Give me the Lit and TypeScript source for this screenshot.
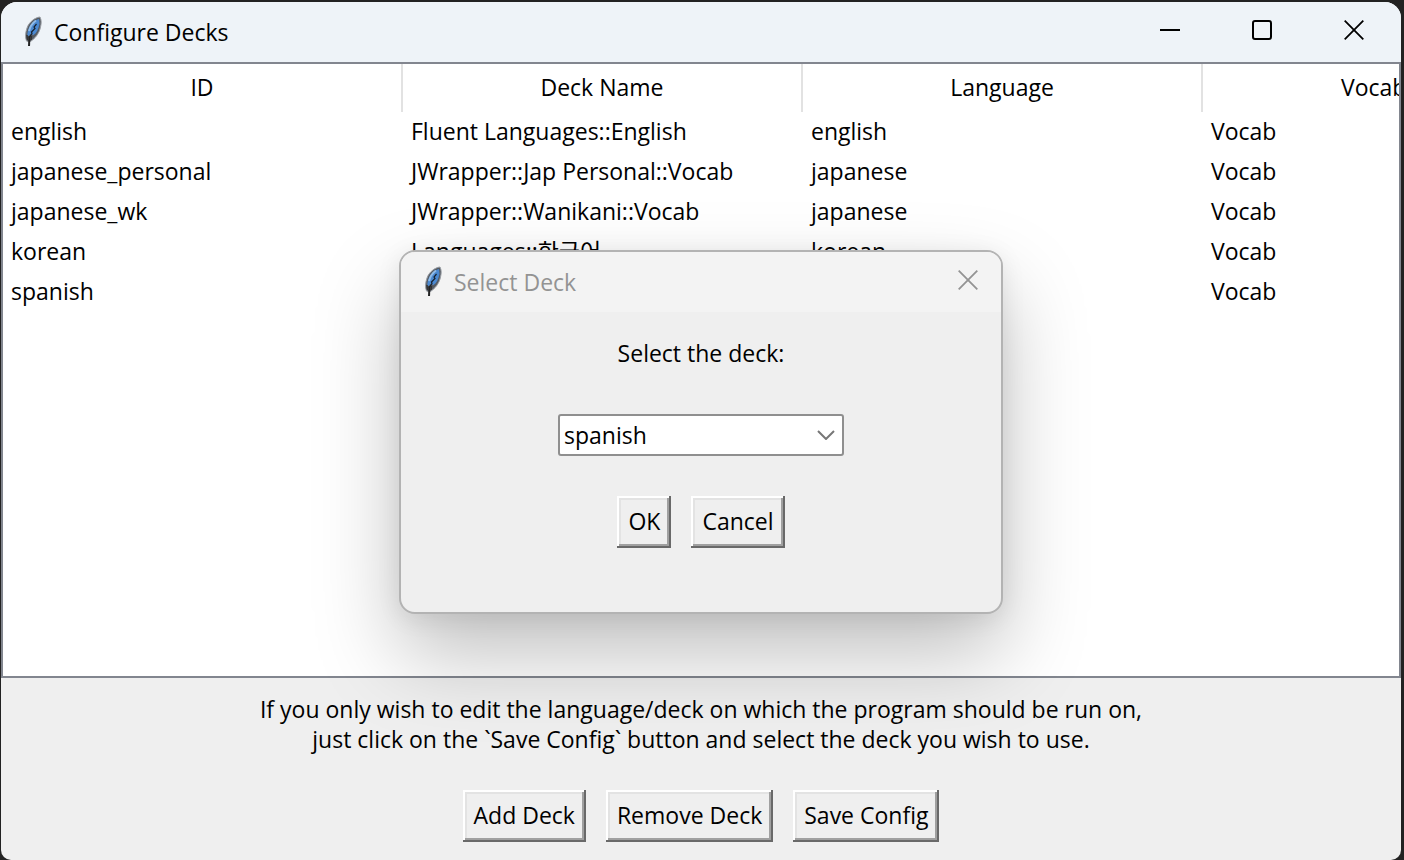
import { LitElement, html, css } from "lit";
import { customElement, state } from "lit/decorators.js";

interface Deck {
  id: string;
  name: string;
  language: string;
  card: string;
}

const DECKS: Deck[] = [
  { id: "english", name: "Fluent Languages::English", language: "english", card: "Vocab" },
  { id: "japanese_personal", name: "JWrapper::Jap Personal::Vocab", language: "japanese", card: "Vocab" },
  { id: "japanese_wk", name: "JWrapper::Wanikani::Vocab", language: "japanese", card: "Vocab" },
  { id: "korean", name: "Languages::한국어", language: "korean", card: "Vocab" },
  { id: "spanish", name: "", language: "", card: "Vocab" },
];

const feather = html`<svg class="feather" viewBox="0 0 20 32" width="20" height="32" aria-hidden="true">
  <path d="M17 1 C12 1.500 6 6 4 12 C2.300 17 2 21 3.500 25 L6.500 26 C12 23 16.500 17 17.500 11 C18.500 7 18.500 4 17 1Z" fill="#565b63" stroke="#9a9fa5" stroke-width="1"/>
  <path d="M16 3 C12 4 7.500 8 5.500 13 C4.500 16 4 19 4.500 21 L7.500 18 L10.500 19 C13.500 17 15.500 13 16.500 8Z" fill="#4a88d0"/>
  <path d="M13 4.500 C9.500 7 7 11 6 15" fill="none" stroke="#8fbbe8" stroke-width="2"/>
  <path d="M13.500 8 L11 11 L12 12.500 L8.500 16 L9 17.500 L6 22" fill="none" stroke="#17202c" stroke-width="1.200"/>
  <path d="M6.500 20 L6 30" fill="none" stroke="#222" stroke-width="2"/>
  <path d="M4 19 L4.500 24 M8.500 20 L8 24" fill="none" stroke="#333" stroke-width="1.500"/>
</svg>`;

const cross = html`<svg viewBox="0 0 20 20" width="20" height="20" aria-hidden="true">
  <path d="M0.700 0.700 L19.300 19.300 M19.300 0.700 L0.700 19.300" fill="none" stroke="currentColor" stroke-width="1.800"/>
</svg>`;

@customElement("app-root")
export class AppRoot extends LitElement {
  @state() private selected = "spanish";

  static styles = css`
    :host {
      display: block;
      background: #222;
      color: #000;
      font-family: "Open Sans", "Noto Sans CJK KR", sans-serif;
      font-size: 23px;
      line-height: 30px;
    }
    * {
      box-sizing: border-box;
    }
    .desktop {
      min-height: 100vh;
      padding: 2px 3px 0 1px;
      display: flex;
    }
    .window {
      position: relative;
      flex: 1;
      min-width: 0;
      display: flex;
      flex-direction: column;
      background: #efefef;
      border-radius: 16px 16px 10px 10px;
      overflow: hidden;
    }
    .titlebar {
      display: flex;
      align-items: center;
      height: 60px;
      padding: 0 1px 0 22px;
      background: #eef3f8;
    }
    .title {
      flex: 1;
      margin: 0 0 0 11px;
      font-size: 23px;
      font-weight: 400;
    }
    .feather {
      display: block;
    }
    .control {
      display: flex;
      align-items: center;
      justify-content: center;
      width: 92px;
      height: 56px;
      margin: 0 0 4px;
      padding: 0;
      border: 0;
      background: none;
      color: #000;
    }
    .list {
      flex: 1;
      border: 2px solid #82868f;
      background: #fff;
      overflow: hidden;
    }
    .decks {
      width: 1600px;
      table-layout: fixed;
      border-collapse: separate;
      border-spacing: 0;
    }
    .decks th {
      height: 48px;
      padding: 0 0 2px;
      border-right: 2px solid #e2e2e2;
      font-weight: 400;
      text-align: center;
    }
    .decks th.clipped {
      padding-left: 138px;
      text-align: left;
    }
    .decks td {
      height: 40px;
      padding: 0 8px 2px;
      white-space: nowrap;
    }
    .footer {
      display: flex;
      flex-direction: column;
      align-items: center;
      gap: 36px;
      padding: 16px 16px 18px;
    }
    .hint {
      margin: 0;
      text-align: center;
    }
    .actions {
      display: flex;
      justify-content: center;
      gap: 20px;
    }
    .button {
      height: 52px;
      padding: 0 11px 2px;
      border: 0;
      background: #efefef;
      color: #000;
      font: inherit;
      white-space: nowrap;
      box-shadow: inset -2px -2px #696969, inset 2px 2px #fff,
        inset -4px -4px #a0a0a0, inset 4px 4px #e3e3e3;
    }
    .dialog {
      position: absolute;
      top: 248px;
      left: 50%;
      transform: translateX(-50%);
      width: 604px;
      height: 364px;
      border: 2px solid #b3b3b3;
      border-radius: 16px;
      background: #efefef;
      background-clip: padding-box;
      box-shadow: 0 40px 84px rgba(0, 0, 0, 0.25), 0 4px 24px rgba(0, 0, 0, 0.08);
    }
    .dialog .titlebar {
      background: #f3f3f3;
      border-radius: 14px 14px 0 0;
      color: #939393;
    }
    .dialog .control {
      width: 64px;
      color: #939393;
    }
    .form {
      display: flex;
      flex-direction: column;
      align-items: center;
      padding-top: 26px;
    }
    .combo {
      display: grid;
      align-items: center;
      width: 286px;
      margin: 46px 0 40px;
    }
    .select {
      grid-area: 1 / 1;
      width: 100%;
      height: 42px;
      padding: 0 32px 0 4px;
      border: 2px solid #8f8f8f;
      border-radius: 3px;
      background: #fff;
      color: #000;
      font: inherit;
      appearance: none;
    }
    .arrow {
      grid-area: 1 / 1;
      justify-self: end;
      margin-right: 9px;
      pointer-events: none;
    }
  `;

  private pick(e: Event) {
    this.selected = (e.target as HTMLSelectElement).value;
  }

  render() {
    return html`
      <div class="desktop">
        <main class="window">
          <header class="titlebar">
            ${feather}
            <h1 class="title">Configure Decks</h1>
            <button class="control" aria-label="Minimize">
              <svg viewBox="0 0 20 20" width="20" height="20" aria-hidden="true">
                <path d="M0 10H20" stroke="currentColor" stroke-width="2" />
              </svg>
            </button>
            <button class="control" aria-label="Maximize">
              <svg viewBox="0 0 20 20" width="20" height="20" aria-hidden="true">
                <rect x="1" y="1" width="18" height="18" rx="2" fill="none" stroke="currentColor" stroke-width="2" />
              </svg>
            </button>
            <button class="control" aria-label="Close">${cross}</button>
          </header>

          <div class="list">
            <table class="decks">
              <thead>
                <tr>
                  <th scope="col">ID</th>
                  <th scope="col">Deck Name</th>
                  <th scope="col">Language</th>
                  <th scope="col" class="clipped">Vocab</th>
                </tr>
              </thead>
              <tbody>
                ${DECKS.map(
                  (d) => html`<tr>
                    <td>${d.id}</td>
                    <td>${d.name}</td>
                    <td>${d.language}</td>
                    <td>${d.card}</td>
                  </tr>`
                )}
              </tbody>
            </table>
          </div>

          <footer class="footer">
            <p class="hint">
              If you only wish to edit the language/deck on which the program should be run on,<br />
              just click on the \`Save Config\` button and select the deck you wish to use.
            </p>
            <div class="actions">
              <button class="button">Add Deck</button>
              <button class="button">Remove Deck</button>
              <button class="button">Save Config</button>
            </div>
          </footer>

          <section class="dialog" role="dialog" aria-labelledby="dialog-title">
            <header class="titlebar">
              ${feather}
              <h2 class="title" id="dialog-title">Select Deck</h2>
              <button class="control" aria-label="Close">${cross}</button>
            </header>
            <div class="form">
              <label for="deck">Select the deck:</label>
              <div class="combo">
                <select class="select" id="deck" @change=${this.pick}>
                  ${DECKS.map(
                    (d) => html`<option value=${d.id} ?selected=${d.id === this.selected}>${d.id}</option>`
                  )}
                </select>
                <svg class="arrow" viewBox="0 0 18 10" width="18" height="10" aria-hidden="true">
                  <path d="M1 1 L9 9 L17 1" fill="none" stroke="#777" stroke-width="2" />
                </svg>
              </div>
              <div class="actions">
                <button class="button">OK</button>
                <button class="button">Cancel</button>
              </div>
            </div>
          </section>
        </main>
      </div>
    `;
  }
}
